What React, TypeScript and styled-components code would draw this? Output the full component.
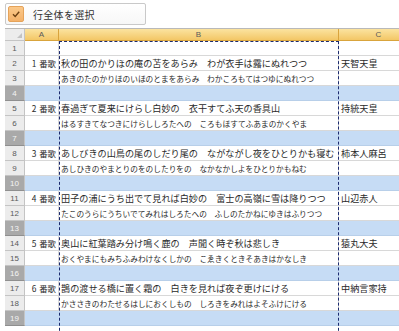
import React from 'react';
import styled, { createGlobalStyle } from 'styled-components';

const GlobalStyle = createGlobalStyle`
  html, body {
    margin: 0;
    padding: 0;
    background: #ffffff;
  }
  body {
    font-family: 'Noto Sans CJK JP', 'Noto Sans', sans-serif;
    color: #222222;
  }
`;

const color = {
  gridLine: '#d8d8d8',
  headerBg: '#ececec',
  headerLine: '#c4c4c4',
  headerText: '#5a5a5a',
  selectedHeader: '#a9a9a9',
  selectedRow: '#c6dcf5',
  colHeaderTop: '#fbe3a0',
  colHeaderBottom: '#f3c766',
  colHeaderLine: '#d9a43c',
  marquee: '#1b2a6e',
};

const StyledPage = styled.div`
  width: 399px;
  height: 331px;
  overflow: hidden;
  position: relative;
`;

const StyledToolbar = styled.div`
  padding: 3px 0 0 5px;
  height: 25px;
  box-sizing: border-box;
`;

const StyledCheckButton = styled.div`
  display: flex;
  align-items: center;
  box-sizing: border-box;
  width: 141px;
  height: 22px;
  padding: 0 2px;
  border: 1px solid #c9c9c9;
  border-radius: 2px;
  background: linear-gradient(#ffffff, #f7f7f7);
`;

const StyledCheckBox = styled.div`
  display: flex;
  align-items: center;
  justify-content: center;
  width: 16px;
  height: 16px;
  border-radius: 2px;
  background: linear-gradient(#fbc98a, #f4b26a);
  border: 1px solid #e5a35a;
  box-sizing: border-box;
`;

const StyledCheckLabel = styled.div`
  padding-left: 9px;
  font-size: 10px;
  color: #333333;
  letter-spacing: 0.3px;
`;

const StyledSheet = styled.div`
  position: relative;
  margin-top: 3px;
  margin-left: 5px;
  display: grid;
  grid-template-columns: 20px 34px 280px 80px;
  grid-auto-rows: 15px;
  grid-template-rows: 12px;
  border-top: 1px solid #b9b9b9;
`;

const StyledCorner = styled.div`
  background: ${color.headerBg};
  border-right: 1px solid ${color.headerLine};
  border-bottom: 1px solid ${color.headerLine};
  position: relative;
  &::after {
    content: '';
    position: absolute;
    right: 2px;
    bottom: 2px;
    border-left: 5px solid transparent;
    border-bottom: 5px solid #c2c2c2;
  }
`;

const StyledColHeader = styled.div`
  display: flex;
  align-items: center;
  justify-content: center;
  font-family: 'Liberation Sans', Arial, sans-serif;
  font-size: 8px;
  color: ${color.headerText};
  background: linear-gradient(${color.colHeaderTop}, ${color.colHeaderBottom});
  border-right: 1px solid ${color.colHeaderLine};
  border-bottom: 1px solid ${color.colHeaderLine};
`;

const StyledRowHeader = styled.div<{ $selected?: boolean }>`
  display: flex;
  align-items: center;
  justify-content: center;
  font-family: 'Liberation Sans', Arial, sans-serif;
  font-size: 8px;
  color: ${({ $selected }) => ($selected ? '#f4f4f4' : color.headerText)};
  background: ${({ $selected }) => ($selected ? color.selectedHeader : color.headerBg)};
  border-right: 1px solid ${color.headerLine};
  border-bottom: 1px solid ${({ $selected }) => ($selected ? '#8f8f8f' : color.headerLine)};
`;

const StyledCell = styled.div<{ $selected?: boolean; $small?: boolean; $align?: 'left' | 'right' }>`
  display: flex;
  align-items: center;
  justify-content: ${({ $align }) => ($align === 'right' ? 'flex-end' : 'flex-start')};
  padding: 0 2px;
  white-space: nowrap;
  font-size: ${({ $small }) => ($small ? '7.7px' : '9.15px')};
  color: #2a2a2a;
  background: ${({ $selected }) => ($selected ? color.selectedRow : '#ffffff')};
  border-right: 1px solid ${({ $selected }) => ($selected ? color.selectedRow : color.gridLine)};
  border-bottom: 1px solid ${({ $selected }) => ($selected ? '#b8cfe9' : color.gridLine)};
`;

const StyledLabel = styled.span`
  font-size: 8.4px;
  word-spacing: 1px;
`;

const StyledMarquee = styled.div`
  position: absolute;
  left: 54px;
  top: 12px;
  width: 280px;
  height: 320px;
  box-sizing: border-box;
  border: 1px dashed ${color.marquee};
  border-bottom: none;
  pointer-events: none;
  z-index: 3;
`;

type Poem = {
  kanji: string;
  kana: string;
  author: string;
};

const poems: Poem[] = [
  {
    kanji: '秋の田のかりほの庵の苫をあらみ　わが衣手は露にぬれつつ',
    kana: 'あきのたのかりほのいほのとまをあらみ　わかころもてはつゆにぬれつつ',
    author: '天智天皇',
  },
  {
    kanji: '春過ぎて夏来にけらし白妙の　衣干すてふ天の香具山',
    kana: 'はるすきてなつきにけらししろたへの　ころもほすてふあまのかくやま',
    author: '持統天皇',
  },
  {
    kanji: 'あしびきの山鳥の尾のしだり尾の　ながながし夜をひとりかも寝む',
    kana: 'あしひきのやまとりのをのしたりをの　なかなかしよをひとりかもねむ',
    author: '柿本人麻呂',
  },
  {
    kanji: '田子の浦にうち出でて見れば白妙の　富士の高嶺に雪は降りつつ',
    kana: 'たこのうらにうちいでてみれはしろたへの　ふしのたかねにゆきはふりつつ',
    author: '山辺赤人',
  },
  {
    kanji: '奥山に紅葉踏み分け鳴く鹿の　声聞く時ぞ秋は悲しき',
    kana: 'おくやまにもみちふみわけなくしかの　こゑきくときそあきはかなしき',
    author: '猿丸大夫',
  },
  {
    kanji: '鵲の渡せる橋に置く霜の　白きを見れば夜ぞ更けにける',
    kana: 'かささきのわたせるはしにおくしもの　しろきをみれはよそふけにける',
    author: '中納言家持',
  },
];

type Row = {
  label?: string;
  text?: string;
  author?: string;
  small?: boolean;
  selected?: boolean;
};

const rows: Row[] = [
  {},
  ...poems.flatMap((poem, i) => [
    { label: `${i + 1} 番歌`, text: poem.kanji, author: poem.author },
    { text: poem.kana, small: true },
    { selected: true },
  ]),
];

const CheckIcon = () => (
  <svg width='10' height='10' viewBox='0 0 10 10'>
    <path d='M2 5.2 L4.2 7.4 L8.2 2.8' fill='none' stroke='#6b3f12' strokeWidth='1.4' />
  </svg>
);

const App = () => (
  <StyledPage>
    <GlobalStyle />
    <StyledToolbar>
      <StyledCheckButton>
        <StyledCheckBox>
          <CheckIcon />
        </StyledCheckBox>
        <StyledCheckLabel>行全体を選択</StyledCheckLabel>
      </StyledCheckButton>
    </StyledToolbar>
    <StyledSheet>
      <StyledCorner />
      <StyledColHeader>A</StyledColHeader>
      <StyledColHeader>B</StyledColHeader>
      <StyledColHeader>C</StyledColHeader>
      {rows.map((row, i) => (
        <React.Fragment key={i}>
          <StyledRowHeader $selected={row.selected}>{i + 1}</StyledRowHeader>
          <StyledCell $selected={row.selected} $align='right'>
            {row.label && <StyledLabel>{row.label}</StyledLabel>}
          </StyledCell>
          <StyledCell $selected={row.selected} $small={row.small}>
            {row.text}
          </StyledCell>
          <StyledCell $selected={row.selected}>{row.author}</StyledCell>
        </React.Fragment>
      ))}
      <StyledMarquee />
    </StyledSheet>
  </StyledPage>
);

export default App;
